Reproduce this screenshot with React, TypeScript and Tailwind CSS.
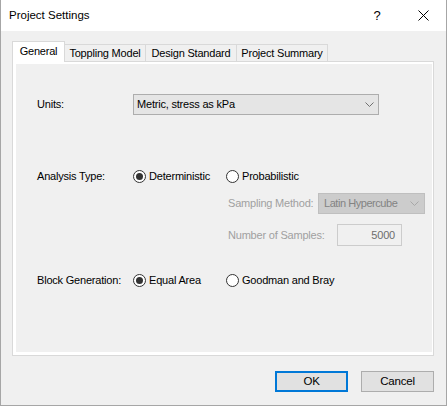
import React from "react";

const font = { fontFamily: '"Liberation Sans", Arial, sans-serif' };

function Radio({ checked }: { checked?: boolean }) {
  return (
    <span className="w-[13px] h-[13px] rounded-full border border-[#333333] bg-white flex items-center justify-center shrink-0">
      {checked && <span className="w-[7px] h-[7px] rounded-full bg-[#333333]" />}
    </span>
  );
}

function Chevron({ color }: { color: string }) {
  return (
    <svg width="9" height="5" viewBox="0 0 9 5" className="shrink-0">
      <polyline points="0.5,0.5 4.5,4.5 8.5,0.5" fill="none" stroke={color} strokeWidth="1" />
    </svg>
  );
}

function Option({ checked, label, width }: { checked?: boolean; label: string; width?: string }) {
  return (
    <div className={`flex items-center gap-[3px] ${width ?? ""}`}>
      <Radio checked={checked} />
      <span className="whitespace-nowrap">{label}</span>
    </div>
  );
}

export default function App() {
  const tabs = ["Toppling Model", "Design Standard", "Project Summary"];

  return (
    <div
      className="w-[447px] h-[406px] bg-[#f0f0f0] border-l border-r border-b border-[#a6a6a6] flex flex-col text-black"
      style={font}
    >
      {/* Title bar */}
      <div className="h-[31px] bg-white flex items-center shrink-0">
        <span className="pl-[8px] text-[11.5px] flex-1">Project Settings</span>
        <span className="w-[46px] text-center text-[13px]">?</span>
        <span className="w-[46px] flex justify-center">
          <svg width="11" height="11" viewBox="0 0 11 11">
            <path d="M0.5 0.5 L10.5 10.5 M10.5 0.5 L0.5 10.5" stroke="#000" strokeWidth="1" />
          </svg>
        </span>
      </div>

      {/* Body */}
      <div className="flex-1 flex flex-col pl-[11px] pr-[12px] pt-[11px] text-[11px] tracking-[-0.2px]">
        {/* Tabs */}
        <div className="flex items-end h-[20px] relative z-10 -mb-px">
          <div className="h-[21px] w-[53px] bg-white border border-b-0 border-[#d9d9d9] flex items-center justify-center pb-[2px]">
            General
          </div>
          {tabs.map((t, i) => (
            <div
              key={t}
              className={`h-[18px] bg-[#f0f0f0] border border-[#d9d9d9] border-l-0 flex items-center justify-center whitespace-nowrap ${
                i === 0 ? "w-[81px]" : "w-[91px]"
              }`}
            >
              {t}
            </div>
          ))}
        </div>

        {/* Panel */}
        <div className="h-[295px] border border-[#d9d9d9] bg-white pt-[2px] pl-[3px] pr-px pb-[3px] flex">
          <div className="flex-1 bg-[#f0f0f0] flex flex-col pl-[21px] pt-[30px]">
            {/* Units */}
            <div className="flex items-center h-[21px]">
              <span className="w-[96px]">Units:</span>
              <div className="w-[246px] h-[21px] bg-[#e5e5e5] border border-[#adadad] flex items-center pl-[3px] pr-[4px]">
                <span className="flex-1">Metric, stress as kPa</span>
                <Chevron color="#707070" />
              </div>
            </div>

            {/* Analysis type */}
            <div className="flex items-center h-[20px] mt-[51px]">
              <span className="w-[96px]">Analysis Type:</span>
              <Option checked label="Deterministic" width="w-[93px]" />
              <Option label="Probabilistic" />
            </div>

            {/* Sampling method */}
            <div className="flex items-center h-[21px] mt-[7px] pl-[191px] text-[#a0a0a0]">
              <span className="w-[90px] whitespace-nowrap">Sampling Method:</span>
              <div className="w-[107px] h-[21px] bg-[#cccccc] border border-[#bfbfbf] flex items-center pl-[5px] pr-[5px] text-[#838383]">
                <span className="flex-1 whitespace-nowrap overflow-hidden tracking-[-0.45px]">Latin Hypercube</span>
                <Chevron color="#a8a8a8" />
              </div>
            </div>

            {/* Number of samples */}
            <div className="flex items-center h-[22px] mt-[10px] pl-[191px] text-[#a0a0a0]">
              <span className="w-[109px] whitespace-nowrap">Number of Samples:</span>
              <div className="w-[65px] h-[22px] border border-[#cccccc] bg-[#f0f0f0] flex items-center justify-end pr-[6px] text-[#6d6d6d]">
                5000
              </div>
            </div>

            {/* Block generation */}
            <div className="flex items-center h-[20px] mt-[24px]">
              <span className="w-[96px]">Block Generation:</span>
              <Option checked label="Equal Area" width="w-[93px]" />
              <Option label="Goodman and Bray" />
            </div>
          </div>
        </div>

        {/* Buttons */}
        <div className="flex justify-end gap-[13px] mt-[15px]">
          <button className="w-[73px] h-[21px] bg-[#e1e1e1] border-2 border-[#0078d7] flex items-center justify-center text-[11.5px]">
            OK
          </button>
          <button className="w-[73px] h-[21px] bg-[#e1e1e1] border border-[#adadad] flex items-center justify-center text-[11.5px]">
            Cancel
          </button>
        </div>
      </div>
    </div>
  );
}
